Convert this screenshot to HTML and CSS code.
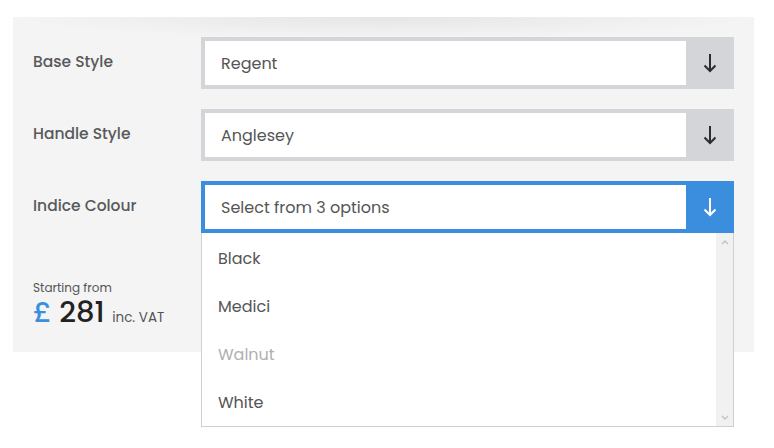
FILE: index.html
```html
<!DOCTYPE html>
<html lang="en">
<head>
  <meta charset="UTF-8" />
  <meta name="viewport" content="width=device-width, initial-scale=1.0"/>
  <title>Product Options</title>
  <link rel="stylesheet" href="styles.css">
</head>
<body>
  <div class="panel">
    <div class="row">
      <div class="label">Base Style</div>
      <div class="select">
        <div class="value">Regent</div>
        <div class="arrow">
          <svg width="14" height="20" viewBox="0 0 14 20"><path d="M7 1v17M1.5 12.5L7 18l5.5-5.5" fill="none" stroke="currentColor" stroke-width="2"/></svg>
        </div>
      </div>
    </div>

    <div class="row">
      <div class="label">Handle Style</div>
      <div class="select">
        <div class="value">Anglesey</div>
        <div class="arrow">
          <svg width="14" height="20" viewBox="0 0 14 20"><path d="M7 1v17M1.5 12.5L7 18l5.5-5.5" fill="none" stroke="currentColor" stroke-width="2"/></svg>
        </div>
      </div>
    </div>

    <div class="row">
      <div class="label">Indice Colour</div>
      <div class="select open">
        <div class="value">Select from 3 options</div>
        <div class="arrow">
          <svg width="14" height="20" viewBox="0 0 14 20"><path d="M7 1v17M1.5 12.5L7 18l5.5-5.5" fill="none" stroke="currentColor" stroke-width="2"/></svg>
        </div>
        <div class="options">
          <ul>
            <li>Black</li>
            <li>Medici</li>
            <li class="disabled">Walnut</li>
            <li>White</li>
          </ul>
          <div class="scrollbar">
            <svg width="8" height="6" viewBox="0 0 8 6"><path d="M1 5l3-3 3 3" fill="none" stroke="#c4c4c4" stroke-width="1.5"/></svg>
            <svg width="8" height="6" viewBox="0 0 8 6"><path d="M1 1l3 3 3-3" fill="none" stroke="#c4c4c4" stroke-width="1.5"/></svg>
          </div>
        </div>
      </div>
    </div>

    <div class="price">
      <div class="from">Starting from</div>
      <div class="amount"><span class="currency">£</span> 281 <span class="vat">inc. VAT</span></div>
    </div>
  </div>
</body>
</html>
```

FILE: styles.css
```css
html, body {
  min-height: 448px;
}

body {
  margin: 0;
  background-color: #fff;
  font-family: "Poppins", "Open Sans", sans-serif;
  color: #555;
}

.panel {
  width: 701px;
  height: 315px;
  margin: 17px 0 0 13px;
  padding: 20px 20px 0 20px;
  background-color: #f4f4f4;
  background-image: radial-gradient(ellipse 50% 100% at 50% 0, rgba(0, 0, 0, 0.06), rgba(0, 0, 0, 0));
  background-size: 100% 22px;
  background-repeat: no-repeat;
  display: flex;
  flex-direction: column;
  gap: 20px;
}

.row {
  display: flex;
  align-items: center;
}

.label {
  width: 168px;
  padding-bottom: 4px;
  font-size: 15.5px;
  font-weight: 500;
  color: #58595b;
}

.select {
  position: relative;
  width: 533px;
  height: 52px;
  box-sizing: border-box;
  border: 4px solid #d4d5d9;
  border-right: none;
  background: #fff;
  display: flex;
}

.select .value {
  flex: 1;
  display: flex;
  align-items: center;
  padding-left: 16px;
  font-size: 16px;
  color: #555;
}

.select .arrow {
  width: 48px;
  background: #d4d5d9;
  display: flex;
  align-items: center;
  justify-content: center;
  color: #2a2c33;
}

.select.open {
  border-color: #3b8ede;
}

.select.open .arrow {
  background: #3b8ede;
  color: #fff;
}

.options {
  position: absolute;
  top: 48px;
  left: -4px;
  width: 533px;
  height: 194px;
  box-sizing: border-box;
  border: 1px solid #cfcfcf;
  border-top: none;
  background: #fff;
  display: flex;
  z-index: 5;
}

.options ul {
  flex: 1;
  list-style: none;
  margin: 0;
  padding: 2px 0 0 0;
}

.options li {
  height: 48px;
  line-height: 48px;
  padding-left: 16px;
  font-size: 16px;
  color: #555;
}

.options li.disabled {
  color: #b0b0b0;
}

.scrollbar {
  width: 17px;
  background: #f1f1f1;
  display: flex;
  flex-direction: column;
  justify-content: space-between;
  align-items: center;
  padding: 6px 0 5px;
}

.price {
  margin-top: 28px;
}

.price .from {
  font-size: 12px;
  line-height: 14px;
  margin-bottom: 2px;
  color: #555;
}

.price .amount {
  font-size: 29px;
  font-weight: 500;
  color: #222;
  line-height: 30px;
}

.price .currency {
  color: #3b8ede;
}

.price .vat {
  font-size: 13.5px;
  font-weight: 400;
  color: #555;
}
```
